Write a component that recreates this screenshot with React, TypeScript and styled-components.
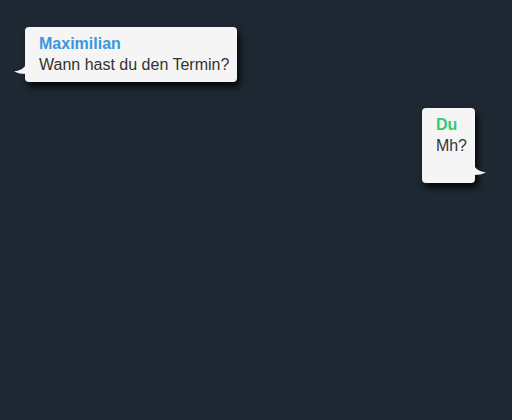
import React from "react";
import styled, { createGlobalStyle } from "styled-components";

const PAGE_BG = `#1d2833`;
const BUBBLE_BG = `#f5f5f5`;

const GlobalStyle = createGlobalStyle`
  html, body {
    margin: 0;
    padding: 0;
    background: ${PAGE_BG};
  }
`;

const Wrapper = styled.div`
  width: 512px;
  height: 420px;
  box-sizing: border-box;
  padding: 27px 37px 0 25px;

  display: flex;
  flex-direction: column;
  gap: 26px;

  background: ${PAGE_BG};
  font-family: "Liberation Sans", Arial, sans-serif;
  font-size: 16px;
`;

type Side = "left" | "right";

const Bubble = styled.div<{ $side: Side }>`
  position: relative;
  align-self: ${(p) => (p.$side === "left" ? "flex-start" : "flex-end")};
  min-height: ${(p) => (p.$side === "right" ? "75px" : "auto")};
  box-sizing: border-box;
  padding: 6px 8px 7px 14px;

  background: ${BUBBLE_BG};
  border-radius: 4px;
  box-shadow: 3px 5px 6px rgba(0, 0, 0, 0.8);
`;

const Name = styled.div<{ $color: string }>`
  font-weight: bold;
  line-height: 21px;
  color: ${(p) => p.$color};
`;

const Text = styled.div`
  line-height: 21px;
  color: #333333;
`;

const Tail = styled.svg<{ $side: Side }>`
  position: absolute;
  bottom: 7px;
  width: 12px;
  height: 11px;
  ${(p) =>
    p.$side === "left"
      ? `left: -11px;`
      : `right: -11px; transform: scaleX(-1);`}
`;

type Message = {
  name: string;
  text: string;
  side: Side;
  color: string;
};

const messages: Message[] = [
  { name: "Maximilian", text: "Wann hast du den Termin?", side: "left", color: "#3a97db" },
  { name: "Du", text: "Mh?", side: "right", color: "#2ecc71" },
];

export default function App(): JSX.Element {
  return (
    <>
      <GlobalStyle />
      <Wrapper>
        {messages.map((m) => (
          <Bubble key={m.name} $side={m.side}>
            <Tail $side={m.side} viewBox="0 0 12 11">
              <path d="M12 0 Q10 6 0 7.5 Q5 10 12 10 Z" fill={BUBBLE_BG} />
            </Tail>
            <Name $color={m.color}>{m.name}</Name>
            <Text>{m.text}</Text>
          </Bubble>
        ))}
      </Wrapper>
    </>
  );
}
